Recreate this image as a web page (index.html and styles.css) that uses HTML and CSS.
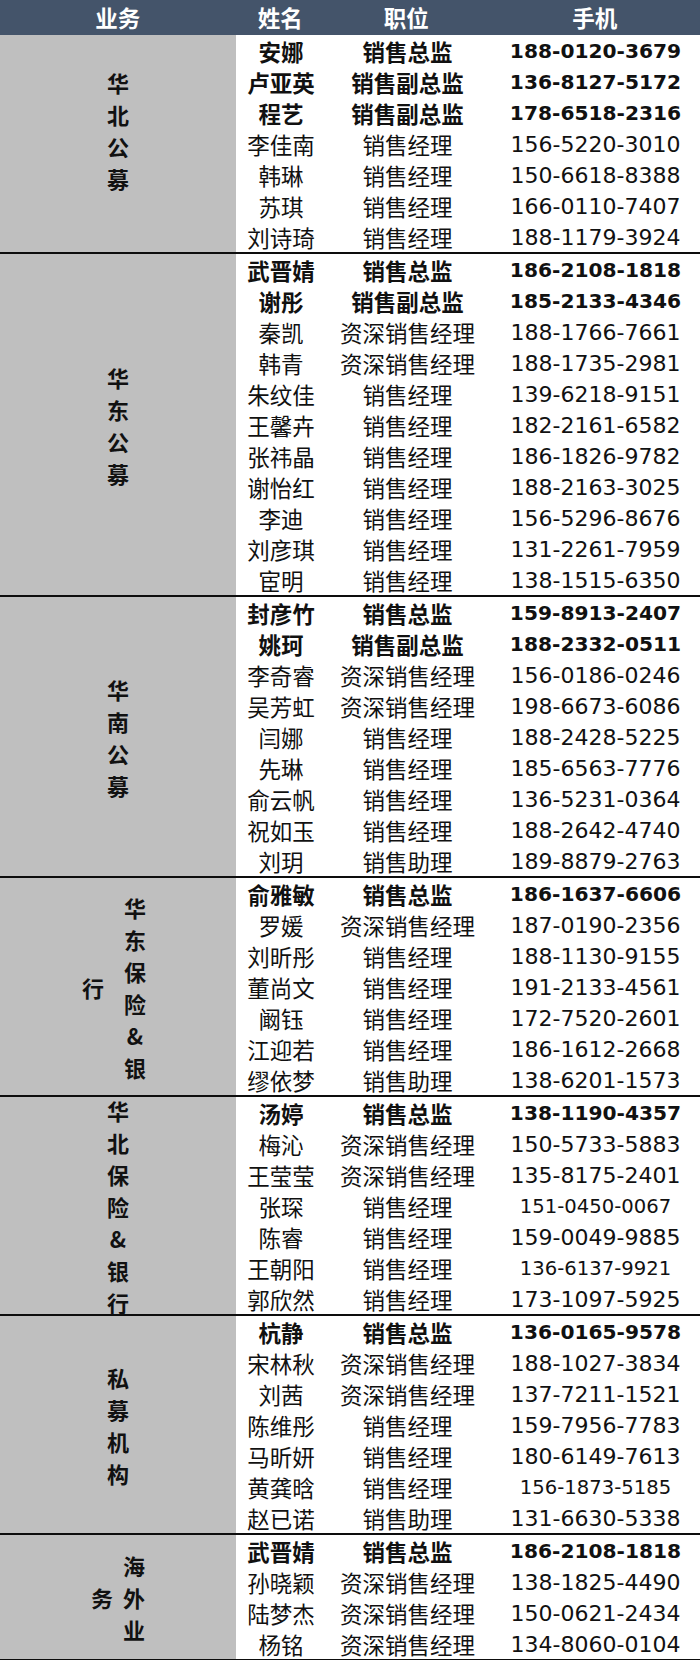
FILE: index.html
```html
<!DOCTYPE html>
<html lang="zh-CN">
<head>
<meta charset="utf-8">
<title>业务联系表</title>
<link rel="stylesheet" href="styles.css">
</head>
<body>
<div class="sheet">
  <div class="head">
    <div class="c-biz">业务</div>
    <div class="c-name">姓名</div>
    <div class="c-pos">职位</div>
    <div class="c-tel">手机</div>
  </div>

  <div class="sec">
    <div class="biz raise"><div class="col"><span>华</span><span>北</span><span>公</span><span>募</span></div></div>
    <div class="rows">
      <div class="row b"><div class="c-name">安娜</div><div class="c-pos">销售总监</div><div class="c-tel">188-0120-3679</div></div>
      <div class="row b"><div class="c-name">卢亚英</div><div class="c-pos">销售副总监</div><div class="c-tel">136-8127-5172</div></div>
      <div class="row b"><div class="c-name">程艺</div><div class="c-pos">销售副总监</div><div class="c-tel">178-6518-2316</div></div>
      <div class="row"><div class="c-name">李佳南</div><div class="c-pos">销售经理</div><div class="c-tel">156-5220-3010</div></div>
      <div class="row"><div class="c-name">韩琳</div><div class="c-pos">销售经理</div><div class="c-tel">150-6618-8388</div></div>
      <div class="row"><div class="c-name">苏琪</div><div class="c-pos">销售经理</div><div class="c-tel">166-0110-7407</div></div>
      <div class="row"><div class="c-name">刘诗琦</div><div class="c-pos">销售经理</div><div class="c-tel">188-1179-3924</div></div>
    </div>
  </div>

  <div class="sec">
    <div class="biz"><div class="col"><span>华</span><span>东</span><span>公</span><span>募</span></div></div>
    <div class="rows">
      <div class="row b"><div class="c-name">武晋婧</div><div class="c-pos">销售总监</div><div class="c-tel">186-2108-1818</div></div>
      <div class="row b"><div class="c-name">谢彤</div><div class="c-pos">销售副总监</div><div class="c-tel">185-2133-4346</div></div>
      <div class="row"><div class="c-name">秦凯</div><div class="c-pos">资深销售经理</div><div class="c-tel">188-1766-7661</div></div>
      <div class="row"><div class="c-name">韩青</div><div class="c-pos">资深销售经理</div><div class="c-tel">188-1735-2981</div></div>
      <div class="row"><div class="c-name">朱纹佳</div><div class="c-pos">销售经理</div><div class="c-tel">139-6218-9151</div></div>
      <div class="row"><div class="c-name">王馨卉</div><div class="c-pos">销售经理</div><div class="c-tel">182-2161-6582</div></div>
      <div class="row"><div class="c-name">张祎晶</div><div class="c-pos">销售经理</div><div class="c-tel">186-1826-9782</div></div>
      <div class="row"><div class="c-name">谢怡红</div><div class="c-pos">销售经理</div><div class="c-tel">188-2163-3025</div></div>
      <div class="row"><div class="c-name">李迪</div><div class="c-pos">销售经理</div><div class="c-tel">156-5296-8676</div></div>
      <div class="row"><div class="c-name">刘彦琪</div><div class="c-pos">销售经理</div><div class="c-tel">131-2261-7959</div></div>
      <div class="row"><div class="c-name">宦明</div><div class="c-pos">销售经理</div><div class="c-tel">138-1515-6350</div></div>
    </div>
  </div>

  <div class="sec">
    <div class="biz"><div class="col"><span>华</span><span>南</span><span>公</span><span>募</span></div></div>
    <div class="rows">
      <div class="row b"><div class="c-name">封彦竹</div><div class="c-pos">销售总监</div><div class="c-tel">159-8913-2407</div></div>
      <div class="row b"><div class="c-name">姚珂</div><div class="c-pos">销售副总监</div><div class="c-tel">188-2332-0511</div></div>
      <div class="row"><div class="c-name">李奇睿</div><div class="c-pos">资深销售经理</div><div class="c-tel">156-0186-0246</div></div>
      <div class="row"><div class="c-name">吴芳虹</div><div class="c-pos">资深销售经理</div><div class="c-tel">198-6673-6086</div></div>
      <div class="row"><div class="c-name">闫娜</div><div class="c-pos">销售经理</div><div class="c-tel">188-2428-5225</div></div>
      <div class="row"><div class="c-name">先琳</div><div class="c-pos">销售经理</div><div class="c-tel">185-6563-7776</div></div>
      <div class="row"><div class="c-name">俞云帆</div><div class="c-pos">销售经理</div><div class="c-tel">136-5231-0364</div></div>
      <div class="row"><div class="c-name">祝如玉</div><div class="c-pos">销售经理</div><div class="c-tel">188-2642-4740</div></div>
      <div class="row"><div class="c-name">刘玥</div><div class="c-pos">销售助理</div><div class="c-tel">189-8879-2763</div></div>
    </div>
  </div>

  <div class="sec">
    <div class="biz wide"><div class="col"><span>行</span></div><div class="col"><span>华</span><span>东</span><span>保</span><span>险</span><span>&amp;</span><span>银</span></div></div>
    <div class="rows">
      <div class="row b"><div class="c-name">俞雅敏</div><div class="c-pos">销售总监</div><div class="c-tel">186-1637-6606</div></div>
      <div class="row"><div class="c-name">罗媛</div><div class="c-pos">资深销售经理</div><div class="c-tel">187-0190-2356</div></div>
      <div class="row"><div class="c-name">刘昕彤</div><div class="c-pos">销售经理</div><div class="c-tel">188-1130-9155</div></div>
      <div class="row"><div class="c-name">董尚文</div><div class="c-pos">销售经理</div><div class="c-tel">191-2133-4561</div></div>
      <div class="row"><div class="c-name">阚钰</div><div class="c-pos">销售经理</div><div class="c-tel">172-7520-2601</div></div>
      <div class="row"><div class="c-name">江迎若</div><div class="c-pos">销售经理</div><div class="c-tel">186-1612-2668</div></div>
      <div class="row"><div class="c-name">缪依梦</div><div class="c-pos">销售助理</div><div class="c-tel">138-6201-1573</div></div>
    </div>
  </div>

  <div class="sec">
    <div class="biz"><div class="col"><span>华</span><span>北</span><span>保</span><span>险</span><span>&amp;</span><span>银</span><span>行</span></div></div>
    <div class="rows">
      <div class="row b"><div class="c-name">汤婷</div><div class="c-pos">销售总监</div><div class="c-tel">138-1190-4357</div></div>
      <div class="row"><div class="c-name">梅沁</div><div class="c-pos">资深销售经理</div><div class="c-tel">150-5733-5883</div></div>
      <div class="row"><div class="c-name">王莹莹</div><div class="c-pos">资深销售经理</div><div class="c-tel">135-8175-2401</div></div>
      <div class="row"><div class="c-name">张琛</div><div class="c-pos">销售经理</div><div class="c-tel sm">151-0450-0067</div></div>
      <div class="row"><div class="c-name">陈睿</div><div class="c-pos">销售经理</div><div class="c-tel">159-0049-9885</div></div>
      <div class="row"><div class="c-name">王朝阳</div><div class="c-pos">销售经理</div><div class="c-tel sm">136-6137-9921</div></div>
      <div class="row"><div class="c-name">郭欣然</div><div class="c-pos">销售经理</div><div class="c-tel">173-1097-5925</div></div>
    </div>
  </div>

  <div class="sec">
    <div class="biz"><div class="col"><span>私</span><span>募</span><span>机</span><span>构</span></div></div>
    <div class="rows">
      <div class="row b"><div class="c-name">杭静</div><div class="c-pos">销售总监</div><div class="c-tel">136-0165-9578</div></div>
      <div class="row"><div class="c-name">宋林秋</div><div class="c-pos">资深销售经理</div><div class="c-tel">188-1027-3834</div></div>
      <div class="row"><div class="c-name">刘茜</div><div class="c-pos">资深销售经理</div><div class="c-tel">137-7211-1521</div></div>
      <div class="row"><div class="c-name">陈维彤</div><div class="c-pos">销售经理</div><div class="c-tel">159-7956-7783</div></div>
      <div class="row"><div class="c-name">马昕妍</div><div class="c-pos">销售经理</div><div class="c-tel">180-6149-7613</div></div>
      <div class="row"><div class="c-name">黄龚晗</div><div class="c-pos">销售经理</div><div class="c-tel sm">156-1873-5185</div></div>
      <div class="row"><div class="c-name">赵已诺</div><div class="c-pos">销售助理</div><div class="c-tel">131-6630-5338</div></div>
    </div>
  </div>

  <div class="sec">
    <div class="biz"><div class="col"><span>务</span></div><div class="col"><span>海</span><span>外</span><span>业</span></div></div>
    <div class="rows">
      <div class="row b"><div class="c-name">武晋婧</div><div class="c-pos">销售总监</div><div class="c-tel">186-2108-1818</div></div>
      <div class="row"><div class="c-name">孙晓颖</div><div class="c-pos">资深销售经理</div><div class="c-tel">138-1825-4490</div></div>
      <div class="row"><div class="c-name">陆梦杰</div><div class="c-pos">资深销售经理</div><div class="c-tel">150-0621-2434</div></div>
      <div class="row"><div class="c-name">杨铭</div><div class="c-pos">资深销售经理</div><div class="c-tel">134-8060-0104</div></div>
    </div>
  </div>
</div>
</body>
</html>
```
FILE: styles.css
```css
html, body {
  margin: 0;
  padding: 0;
  background: #ffffff;
}

.sheet {
  width: 700px;
  font-family: "Noto Sans CJK SC", "Noto Sans", sans-serif;
  font-size: 22.5px;
  color: #111;
}

.head {
  display: flex;
  height: 35px;
  background: #44546a;
  color: #ffffff;
  font-weight: 700;
  line-height: 35px;
}

.c-biz {
  width: 236px;
  text-align: center;
}

.c-name {
  width: 90px;
  text-align: center;
  white-space: nowrap;
}

.c-pos {
  width: 163px;
  text-align: center;
  white-space: nowrap;
}

.c-tel {
  width: 211px;
  text-align: center;
  white-space: nowrap;
}

.head .c-tel {
  padding-left: 2px;
}

.row .c-tel {
  font-family: "DejaVu Sans", sans-serif;
  font-size: 22px;
  padding-left: 2px;
  box-sizing: border-box;
}

.row.b .c-tel {
  font-size: 20.2px;
}

.row .c-tel.sm {
  font-size: 19.6px;
}

.sec {
  display: flex;
  border-bottom: 2px solid #0d0d0d;
}

.biz {
  width: 236px;
  flex: none;
  contain: size;
  background: #bfbfbf;
  display: flex;
  justify-content: center;
  align-items: center;
  gap: 10px;
  font-weight: 700;
  font-size: 22px;
}

.biz.raise {
  padding-bottom: 28px;
  box-sizing: border-box;
}

.biz.wide {
  gap: 20px;
  padding-right: 8px;
  box-sizing: border-box;
}

.col {
  display: flex;
  flex-direction: column;
  align-items: center;
  line-height: 32px;
}

.rows {
  display: flex;
  flex-direction: column;
}

.row {
  display: flex;
  height: 31px;
  line-height: 31px;
  padding-top: 1px;
  box-sizing: border-box;
}

.row.b {
  font-weight: 700;
}
```
